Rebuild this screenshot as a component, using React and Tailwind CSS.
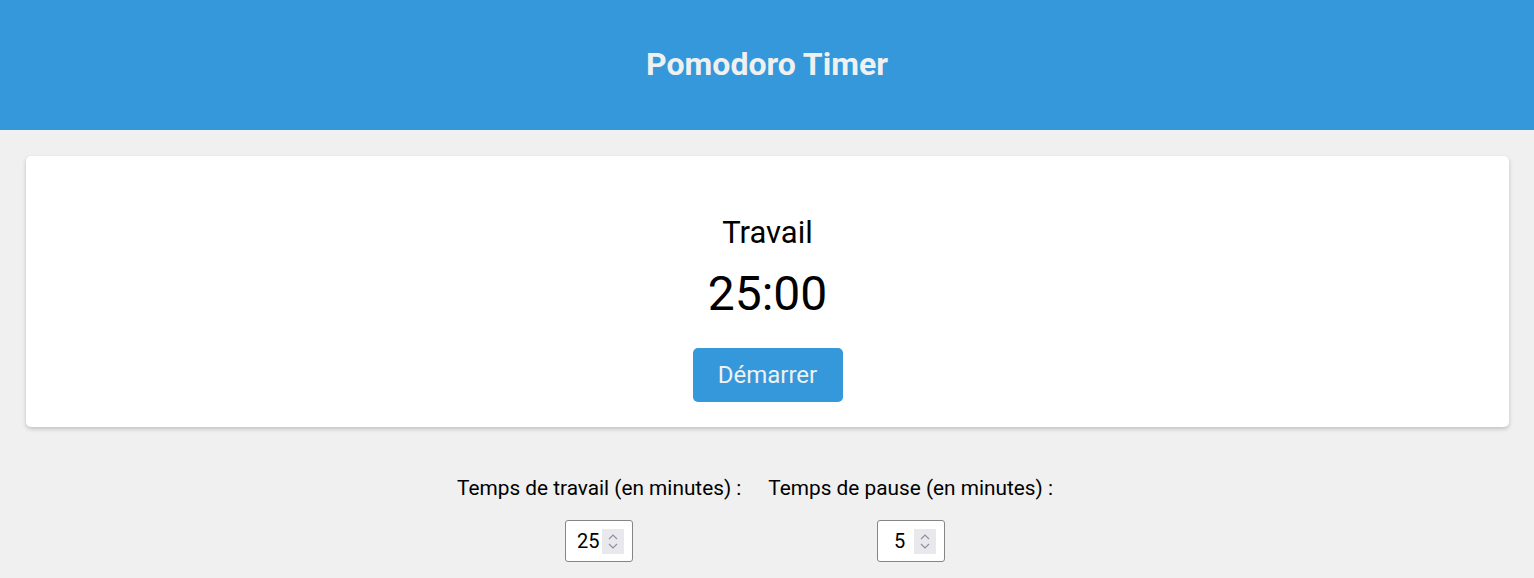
import React from "react";

const Spinner = () => (
  <span className="flex flex-col items-center justify-center w-[22px] h-[25px] bg-[#e9e9ed]">
    <svg width="10" height="6" viewBox="0 0 10 6" className="mb-[3px]">
      <path d="M1 5 L5 1 L9 5" fill="none" stroke="#8f8f9d" strokeWidth="1.2" />
    </svg>
    <svg width="10" height="6" viewBox="0 0 10 6">
      <path d="M1 1 L5 5 L9 1" fill="none" stroke="#8f8f9d" strokeWidth="1.2" />
    </svg>
  </span>
);

const NumberField = ({ value }) => (
  <div className="flex items-center w-[68px] h-[42px] bg-white border border-[#858585] rounded-[3px] pl-[8px] pr-[8px]">
    <span className="flex-1 text-center text-[20px] leading-[24px] text-black">{value}</span>
    <Spinner />
  </div>
);

const App = () => {
  return (
    <div
      className="min-h-[578px] bg-[#f0f0f0]"
      style={{ fontFamily: "Roboto, 'Noto Sans', sans-serif" }}
    >
      {/* header */}
      <header className="h-[130px] bg-[#3498db] flex items-center justify-center pb-[2px]">
        <h1 className="text-[32px] leading-[38px] font-bold text-[#f0f0f0]">Pomodoro Timer</h1>
      </header>

      {/* timer card */}
      <div className="ml-[26px] mr-[25px] mt-[26px] h-[271px] bg-white rounded-[5px] shadow-[0_2px_4px_rgba(0,0,0,0.2)] flex flex-col items-center pt-[59px]">
        <h2 className="text-[31px] leading-[36px] text-black">Travail</h2>
        <div className="mt-[15px] text-[48px] leading-[56px] text-black">25:00</div>
        <button className="mt-[26px] w-[150px] h-[54px] rounded-[5px] bg-[#3498db] text-[24px] text-[#f0f0f0] flex items-center justify-center">
          Démarrer
        </button>
      </div>

      {/* settings */}
      <div className="flex justify-center gap-[27px] pr-[24px] mt-[49px]">
        <div className="flex flex-col items-center">
          <label className="text-[20.8px] leading-[24px] text-black">Temps de travail (en minutes) :</label>
          <div className="mt-[20px]">
            <NumberField value="25" />
          </div>
        </div>
        <div className="flex flex-col items-center">
          <label className="text-[20.8px] leading-[24px] text-black">Temps de pause (en minutes) :</label>
          <div className="mt-[20px]">
            <NumberField value="5" />
          </div>
        </div>
      </div>
    </div>
  );
};

export default App;
